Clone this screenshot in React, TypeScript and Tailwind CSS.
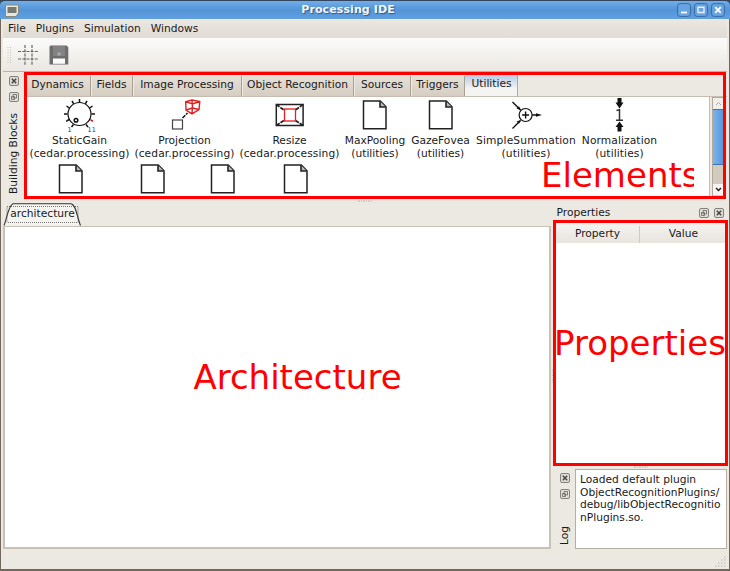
import React from "react";

const items = [
  { name: "StaticGain", group: "(cedar.processing)", icon: "gain", width: "w-[105px]", tracking: "tracking-[0.11px]" },
  { name: "Projection", group: "(cedar.processing)", icon: "projection", width: "w-[105px]", tracking: "tracking-[0.11px]" },
  { name: "Resize", group: "(cedar.processing)", icon: "resize", width: "w-[105px]", tracking: "tracking-[0.11px]" },
  { name: "MaxPooling", group: "(utilities)", icon: "file", width: "w-[66px]", tracking: "" },
  { name: "GazeFovea", group: "(utilities)", icon: "file", width: "w-[65px]", tracking: "" },
  { name: "SimpleSummation", group: "(utilities)", icon: "sum", width: "w-[106px]", tracking: "tracking-[0.15px]" },
  { name: "Normalization", group: "(utilities)", icon: "norm", width: "w-[81px]", tracking: "tracking-[0.1px]" },
];

const tabs = [
  { label: "Dynamics", width: "w-[66px]" },
  { label: "Fields", width: "w-[42px]" },
  { label: "Image Processing", width: "w-[109px]" },
  { label: "Object Recognition", width: "w-[112px]" },
  { label: "Sources", width: "w-[57px]" },
  { label: "Triggers", width: "w-[54px]" },
];

function FileIcon() {
  return (
    <svg width="26" height="30" viewBox="0 0 26 30" className="shrink-0" fill="none" stroke="#222" strokeWidth="1.5">
      <path d="M1.5 1H18.3L24 6.8V28.8H1.5Z" />
      <path d="M18 1.2V7H23.8" fill="#bbb" strokeWidth="1.6" />
    </svg>
  );
}

function GainIcon() {
  return (
    <svg width="36" height="36" viewBox="0 0 36 36" fill="none" stroke="#111" strokeWidth="1.5">
      <circle cx="17.5" cy="17" r="11.5" strokeWidth="1.2" />
      <circle cx="14" cy="23.3" r="1.8" />
      <path d="M17.5 5V2M11.7 6.8 10 4M23.3 6.8 25 4M7.3 11 4.5 9M27.7 11 30.5 9M5.5 17H2M29.5 17H33M7 22.5 4.2 24.3M11.5 27.5 9.5 30M24 27.5 26 30" />
      <path d="M28.3 22.5 31 24.3" stroke="#e00000" />
      <text x="5.5" y="34.8" fontSize="6.5" fill="#333" stroke="none" fontFamily="DejaVu Sans, sans-serif">1</text>
      <text x="25.5" y="34.8" fontSize="6.5" fill="#333" stroke="none" fontFamily="DejaVu Sans, sans-serif">11</text>
    </svg>
  );
}

function ItemIcon({ kind }: { kind: string }) {
  if (kind === "gain") return <GainIcon />;
  if (kind === "projection")
    return (
      <svg width="36" height="36" viewBox="0 0 36 36" fill="none">
        <rect x="5.5" y="23" width="10" height="9" stroke="#444" strokeWidth="1.2" />
        <path d="M15.5 21 20.5 16" stroke="#111" strokeWidth="1.5" strokeDasharray="4 1" />
        <path d="M18.7 4.7 25 3 32.8 4.5 32 12.5 25 16.8 19 13ZM18.7 4.7 25.5 7 32.8 4.5M25.5 7 25 16.8M25 3 25.5 11 19 13M25.5 11 32 12.5" stroke="#e02020" strokeWidth="1.4" />
      </svg>
    );
  if (kind === "resize")
    return (
      <svg width="36" height="36" viewBox="0 0 36 36" fill="none" stroke="#222" strokeWidth="1.5">
        <rect x="4.3" y="7.5" width="26.8" height="21" />
        <path d="M4.3 7.5 12 13M31 7.5 23.5 13M4.3 28.5 12 23.5M31 28.5 23.5 23.5" strokeDasharray="4 1" strokeWidth="1.8" />
        <rect x="12.5" y="12" width="11" height="12" stroke="#e02020" strokeWidth="1.3" />
      </svg>
    );
  if (kind === "sum")
    return (
      <svg width="36" height="36" viewBox="0 0 36 36" fill="none" stroke="#111" strokeWidth="1.4">
        <circle cx="17.6" cy="18" r="6.5" strokeWidth="1.2" />
        <path d="M14.1 18H21.1M17.6 14.5V21.5M4.5 5 12.5 13M4.5 31.5 12.5 23.5M24.2 18H30" />
        <path d="M28 16.2 34 18 28 19.8ZM13 13.3 11 9.2 8.5 11.6ZM13 22.9 11 26.8 8.5 24.4Z" fill="#111" stroke="none" />
      </svg>
    );
  if (kind === "norm")
    return (
      <svg width="36" height="36" viewBox="0 0 36 36">
        <path d="M15.5 1h4v4.5h2L17.5 11.5 13.5 5.5H15.5ZM15.5 34.5h4v-4.5h2L17.5 24.5 13.5 30H15.5Z" fill="#111" />
        <path d="M14.5 13.5 17.5 12.8V23M14 23.2H21" fill="none" stroke="#333" strokeWidth="1.5" />
      </svg>
    );
  return <FileIcon />;
}

function CloseGlyph() {
  return (
    <svg width="10" height="10" viewBox="0 0 10 10" fill="#dedad4" stroke="#85817b" className="shrink-0">
      <rect x=".5" y=".5" width="9" height="9" rx="1.5" />
      <path d="M2.8 2.8 7.2 7.2M7.2 2.8 2.8 7.2" stroke="#444" strokeWidth="1.4" />
    </svg>
  );
}

function FloatGlyph() {
  return (
    <svg width="10" height="10" viewBox="0 0 10 10" fill="#e2ded8" stroke="#85817b" className="shrink-0">
      <rect x=".5" y=".5" width="9" height="9" rx="1.5" />
      <path d="M4 2.5H7.5V6H4ZM2.5 4.5H5.5V7.5H2.5Z" strokeWidth=".8" stroke="#666" />
    </svg>
  );
}

function WindowButton({ children }: { children: React.ReactNode }) {
  return (
    <svg width="14" height="14" viewBox="0 0 14 14" fill="none">
      <rect x=".6" y=".6" width="12.8" height="12.8" rx="2.5" fill="#68a4e2" stroke="#376ba4" />
      {children}
    </svg>
  );
}

function Grip() {
  return (
    <div className="flex gap-px">
      {[0, 1, 2, 3, 4, 5].map((n) => (
        <span key={n} className="h-[2px] w-[1.5px] bg-[#d2cdc5]" />
      ))}
    </div>
  );
}

function TitleBar() {
  return (
    <header className="flex h-[19px] shrink-0 items-center rounded-t-[5px] border-t border-[#34465e] bg-linear-to-b from-[#72aee8] via-[#5294d9] to-[#629fdf] pr-[5px] pl-[5px]">
      <svg width="14" height="13" viewBox="0 0 14 13">
        <path d="M.5 1H13.5V9L11 12.5H.5Z" fill="#e9e7df" stroke="#8a8777" />
        <path d="M2.5 3H11.5V9H2.5Z" fill="#777a72" />
      </svg>
      <h1 className="flex-1 text-center text-[11px] leading-[18px] font-bold tracking-[0.1px] text-[#f4f6fa] [text-shadow:1px_1px_1px_#2c5a8c]">
        Processing IDE
      </h1>
      <div className="flex gap-[3px]">
        <WindowButton>
          <path d="M4 9.5H10" stroke="#fff" strokeWidth="1.8" />
        </WindowButton>
        <WindowButton>
          <path d="M4 4.2H10V9.5H4Z" stroke="#e7f0fa" strokeWidth="1.4" />
        </WindowButton>
        <WindowButton>
          <path d="M4.2 4.2 9.8 9.8M9.8 4.2 4.2 9.8" stroke="#fff" strokeWidth="1.8" />
        </WindowButton>
      </div>
    </header>
  );
}

function ToolBar() {
  return (
    <div className="flex h-[34px] shrink-0 items-center border-t border-b border-t-white border-b-[#b8b2a8] bg-linear-to-b from-[#faf9f7] from-10% via-[#f3f1ed] via-50% to-[#ebe8e3] pl-[4px]">
      <svg width="5" height="16" viewBox="0 0 5 16" stroke="#c5c0b7" strokeDasharray="1 1.5">
        <path d="M1 0V16M3.5 0V16" />
      </svg>
      <svg width="21" height="21" viewBox="0 0 21 21" className="ml-[6px]" stroke="#666" strokeDasharray="3 1.2" strokeWidth="1.2">
        <path d="M0 6.5H21M0 14H21M7 0V21M14 0V21" />
      </svg>
      <svg width="20" height="20" viewBox="0 0 20 20" className="ml-[10px]">
        <path d="M1.5 .5H17.5L19.3 2.3V19.5H.5V1.5Z" fill="#6d6d6d" />
        <path d="M4 1H16V11H4Z" fill="#828282" />
        <circle cx="10" cy="9" r="1.7" fill="#aaa" />
        <path d="M4 13.5H16V18.8H4Z" fill="#fafafa" />
      </svg>
    </div>
  );
}

function BuildingBlocks() {
  return (
    <section className="flex h-[126px] shrink-0">
      <div className="flex w-[22px] flex-col items-center gap-[6px] pt-[4px] pr-px">
        <CloseGlyph />
        <FloatGlyph />
        <span className="mt-[5px] -ml-px rotate-180 leading-[13px] whitespace-nowrap [writing-mode:vertical-rl]">Building Blocks</span>
      </div>
      <div className="flex flex-1 flex-col">
        <div className="flex h-[24px] shrink-0 items-end">
          {tabs.map((t) => (
            <div key={t.label} className={`${t.width} flex h-[20px] shrink-0 items-center justify-center border-r border-[#aaa092] bg-linear-to-b from-[#e6e1d9] to-[#d5cdc1] pb-[3px] whitespace-nowrap shadow-[inset_1px_0_0_#eeeae4]`}>
              {t.label}
            </div>
          ))}
          <div className="flex h-[24px] w-[53px] items-center justify-center border-r border-[#b0a89d] bg-linear-to-b from-[#a9c3e4] to-[#f4f4f3] to-70% pb-px pl-px">
            Utilities
          </div>
        </div>
        <div className="flex flex-1 border-t border-[#c6bdb0]">
          <div className="flex w-[685px] shrink-0 flex-col border-r border-b border-[#c6bdb0] bg-white pl-[2px]">
            <div className="flex">
              {items.map((it) => (
                <div key={it.name} className={`${it.width} flex h-[67px] shrink-0 flex-col items-center text-center leading-[12.5px] whitespace-nowrap`}>
                  <div className="mb-[2px] flex h-[36px] items-center">
                    <ItemIcon kind={it.icon} />
                  </div>
                  <span className={it.icon === "sum" || it.icon === "norm" ? it.tracking : ""}>{it.name}</span>
                  <span className={it.tracking}>{it.group}</span>
                </div>
              ))}
            </div>
            <div className="flex [&>div]:flex [&>div]:justify-center">
              <div className="w-[88px]"><FileIcon /></div>
              <div className="w-[76px]"><FileIcon /></div>
              <div className="w-[63px]"><FileIcon /></div>
              <div className="w-[83px]"><FileIcon /></div>
            </div>
          </div>
          <div className="ml-[2px] flex w-[13px] flex-col border border-[#b3a999] bg-[#d3cabe]">
            <div className="flex h-[11px] items-center justify-center bg-[#f1efec]">
              <svg width="7" height="5" viewBox="0 0 7 5" fill="none" stroke="#aaa"><path d="M1 4 3.5 1.5 6 4" /></svg>
            </div>
            <div className="h-[56px] border-y border-[#3e74b0] bg-linear-to-r from-[#7db3ea] to-[#5494da]" />
            <div className="flex-1" />
            <div className="mb-[2px] flex h-[11px] items-center justify-center bg-[#f6f5f3]">
              <svg width="7" height="5" viewBox="0 0 7 5" fill="none" stroke="#222" strokeWidth="1.5"><path d="M1 1 3.5 3.5 6 1" /></svg>
            </div>
          </div>
        </div>
      </div>
    </section>
  );
}

export default function App() {
  return (
    <div className="relative flex h-[571px] w-[730px] flex-col overflow-hidden bg-[#3c4654] font-['DejaVu_Sans',sans-serif] text-[10.67px] text-[#1a1a1a]">
      <TitleBar />
      <div className="flex flex-1 flex-col border-x border-b-2 border-[#72675c] bg-[#ece9e3] pl-[2px] pr-[2px]">
        <nav className="flex h-[19px] shrink-0 items-center gap-[10px] bg-linear-to-b from-[#ebe7e1] to-[#e1dcd5] pl-[5px]">
          <span>File</span>
          <span>Plugins</span>
          <span>Simulation</span>
          <span>Windows</span>
        </nav>
        <ToolBar />
        <BuildingBlocks />
        <div className="flex h-[5px] shrink-0 items-center justify-center"><Grip /></div>
        <main className="flex h-[346px] shrink-0">
          <section className="flex w-[548px] shrink-0 flex-col">
            <div className="h-[23px] shrink-0">
              <svg width="80" height="23" viewBox="0 0 80 23" className="block">
                <path d="M1 22.5C4 16 5 3 10 .7H68C73 1.5 74 14 77.5 22.5" fill="#f5f4f1" stroke="#333" strokeWidth="1.1" />
                <path d="M4 3.5H75V19.5H4Z" fill="none" stroke="#555" strokeWidth=".8" strokeDasharray="1 1" />
                <text x="7.3" y="14.3" fontSize="10.67" fill="#1a1a1a" fontFamily="DejaVu Sans, sans-serif">architecture</text>
              </svg>
            </div>
            <div className="flex flex-1 items-center justify-center border-2 border-t border-[#c9c1b6] bg-white pt-0 pb-[21px] pr-[2px] pl-[43px] text-[34px] leading-none text-[#ff0000]">
              Architecture
            </div>
          </section>
          <div className="flex w-[4px] shrink-0 items-center justify-center"><div className="rotate-90"><Grip /></div></div>
          <aside className="flex min-w-0 flex-1 flex-col">
            <div className="flex h-[18px] items-center gap-[5px] pt-[2px] pr-[3px] pl-[1.5px]">
              <span className="flex-1">Properties</span>
              <FloatGlyph />
              <CloseGlyph />
            </div>
            <div className="flex h-[244px] flex-col bg-white">
              <div className="flex h-[22px] shrink-0 items-end bg-linear-to-b from-[#f7f6f4] to-[#e8e4de] pl-px text-center">
                <div className="w-[84px] border-r border-[#d0cac1] pb-px">Property</div>
                <div className="flex-1 pb-px">Value</div>
              </div>
              <div className="flex flex-1 items-start justify-center pt-[83px] pr-[2px] text-[34px] leading-none whitespace-nowrap text-[#ff0000]">Properties</div>
            </div>
            <div className="flex h-[4px] shrink-0 items-center justify-center"><Grip /></div>
            <div className="flex flex-1">
              <div className="flex w-[20px] shrink-0 flex-col items-center gap-[6px] pt-[4px] pb-[4px]">
                <CloseGlyph />
                <FloatGlyph />
                <span className="mt-auto -ml-px rotate-180 leading-[13px] [writing-mode:vertical-rl]">Log</span>
              </div>
              <div className="flex-1 border border-[#b8aea0] bg-white pt-[4px] pl-[4px] leading-[12.7px] whitespace-nowrap">
                Loaded default plugin<br />ObjectRecognitionPlugins/<br />debug/libObjectRecognitio<br />nPlugins.so.
              </div>
            </div>
          </aside>
        </main>
        <footer className="flex flex-1 items-end justify-end pr-px pb-[2px]">
          <svg width="11" height="11" viewBox="0 0 11 11" stroke="#cdc8bf" strokeWidth="1.5" strokeDasharray="1.5 1.5">
            <path d="M0 10H11M3 7H11M6 4H11M9 1H11" />
          </svg>
        </footer>
      </div>
      <div className="absolute top-[72px] left-[24px] h-[127px] w-[702px] border-[3px] border-[#ff0000]" />
      <div className="absolute top-[220px] left-[553px] h-[246px] w-[175px] border-[3px] border-[#ff0000]" />
      <div className="absolute top-[158px] left-[541px] w-[153px] overflow-hidden text-[34px] leading-[34px] text-[#ff0000]">Elements</div>
    </div>
  );
}
